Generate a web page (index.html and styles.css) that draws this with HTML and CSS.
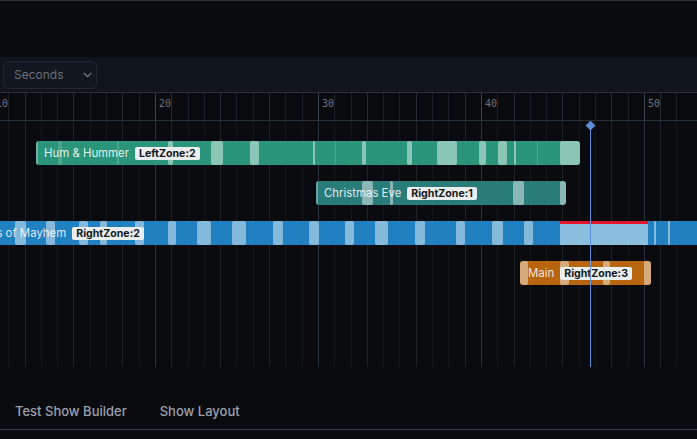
FILE: index.html
```html
<!DOCTYPE html>
<html>
<head>
<meta charset="utf-8">
<link rel="stylesheet" href="styles.css">
</head>
<body>
<div class="app">
  <header class="topbar"></header>
  <div class="toolbar">
    <div class="select">
      <span>Seconds</span>
      <svg class="chev" width="9" height="6" viewBox="0 0 9 6"><path d="M0.7 0.8l3.8 3.9 3.8-3.9" fill="none" stroke="#7b828d" stroke-width="1.2"/></svg>
    </div>
  </div>
  <div class="timeline">
    <div class="ruler">
      <div class="cols">
        <div class="col maj"><span>10</span></div><div class="col"></div><div class="col b3"></div><div class="col"></div><div class="col"></div><div class="col b3"></div><div class="col"></div><div class="col"></div><div class="col b3"></div><div class="col"></div>
        <div class="col maj"><span>20</span></div><div class="col b3"></div><div class="col"></div><div class="col"></div><div class="col b3"></div><div class="col"></div><div class="col"></div><div class="col b3"></div><div class="col"></div><div class="col"></div>
        <div class="col maj"><span>30</span></div><div class="col"></div><div class="col"></div><div class="col b3"></div><div class="col"></div><div class="col"></div><div class="col b3"></div><div class="col"></div><div class="col"></div><div class="col b3"></div>
        <div class="col maj"><span>40</span></div><div class="col"></div><div class="col b3"></div><div class="col"></div><div class="col"></div><div class="col b3"></div><div class="col"></div><div class="col"></div><div class="col b3"></div><div class="col"></div>
        <div class="col maj"><span>50</span></div><div class="col b3"></div><div class="col"></div>
      </div>
    </div>
    <div class="tracks">
      <div class="cols grid">
        <div class="col maj"></div><div class="col"></div><div class="col b3"></div><div class="col"></div><div class="col"></div><div class="col b3"></div><div class="col"></div><div class="col"></div><div class="col b3"></div><div class="col"></div>
        <div class="col maj"></div><div class="col b3"></div><div class="col"></div><div class="col"></div><div class="col b3"></div><div class="col"></div><div class="col"></div><div class="col b3"></div><div class="col"></div><div class="col"></div>
        <div class="col maj"></div><div class="col"></div><div class="col"></div><div class="col b3"></div><div class="col"></div><div class="col"></div><div class="col b3"></div><div class="col"></div><div class="col"></div><div class="col b3"></div>
        <div class="col maj"></div><div class="col"></div><div class="col b3"></div><div class="col"></div><div class="col"></div><div class="col b3"></div><div class="col"></div><div class="col"></div><div class="col b3"></div><div class="col"></div>
        <div class="col maj"></div><div class="col b3"></div><div class="col"></div>
      </div>
      <div class="lanes">
        <div class="lane">
          <div class="clip green" style="left:36px;width:544px">
            <i class="seg edge" style="left:0;width:2px"></i>
            <i class="seg f" style="left:22px;width:4px"></i>
            <i class="seg f" style="left:81px;width:2px"></i>
            <i class="seg" style="left:132px;width:5px"></i>
            <i class="seg" style="left:175px;width:12px"></i>
            <i class="seg" style="left:214px;width:9px"></i>
            <i class="seg" style="left:277px;width:2px"></i>
            <i class="seg f" style="left:299px;width:1px"></i>
            <i class="seg" style="left:326px;width:4px"></i>
            <i class="seg" style="left:371px;width:5px"></i>
            <i class="seg" style="left:401px;width:20px"></i>
            <i class="seg" style="left:443px;width:7px"></i>
            <i class="seg" style="left:462px;width:9px"></i>
            <i class="seg" style="left:478px;width:2px"></i>
            <i class="seg f" style="left:501px;width:1px"></i>
            <i class="seg" style="left:524px;width:20px"></i>
            <span class="label">Hum &amp; Hummer</span><span class="badge">LeftZone:2</span>
          </div>
        </div>
        <div class="lane">
          <div class="clip teal" style="left:316px;width:250px">
            <i class="seg edge" style="left:0;width:2px"></i>
            <i class="seg" style="left:46px;width:11px"></i>
            <i class="seg" style="left:74px;width:3px"></i>
            <i class="seg" style="left:197px;width:11px"></i>
            <i class="seg" style="left:244px;width:6px"></i>
            <span class="label">Christmas Eve</span><span class="badge">RightZone:1</span>
          </div>
        </div>
        <div class="lane">
          <div class="clip blue" style="left:-40px;width:780px">
            <i class="seg" style="left:55px;width:11px"></i>
            <i class="seg" style="left:86px;width:9px"></i>
            <i class="seg" style="left:119px;width:9px"></i>
            <i class="seg" style="left:140px;width:7px"></i>
            <i class="seg" style="left:175px;width:9px"></i>
            <i class="seg" style="left:208px;width:8px"></i>
            <i class="seg" style="left:237px;width:14px"></i>
            <i class="seg" style="left:272px;width:14px"></i>
            <i class="seg" style="left:313px;width:10px"></i>
            <i class="seg" style="left:349px;width:10px"></i>
            <i class="seg" style="left:385px;width:9px"></i>
            <i class="seg" style="left:415px;width:13px"></i>
            <i class="seg" style="left:455px;width:10px"></i>
            <i class="seg" style="left:496px;width:9px"></i>
            <i class="seg" style="left:532px;width:11px"></i>
            <i class="seg" style="left:564px;width:9px"></i>
            <i class="seg sel" style="left:600px;width:88px"></i>
            <i class="seg" style="left:694px;width:2px"></i>
            <i class="seg" style="left:708px;width:2px"></i>
            <span class="label">Carols of Mayhem</span><span class="badge">RightZone:2</span>
          </div>
        </div>
        <div class="lane">
          <div class="clip orange" style="left:520px;width:131px">
            <i class="seg" style="left:0;width:8px"></i>
            <i class="seg" style="left:40px;width:9px"></i>
            <i class="seg" style="left:83px;width:7px"></i>
            <i class="seg" style="left:124px;width:7px"></i>
            <span class="label">Main</span><span class="badge">RightZone:3</span>
          </div>
        </div>
      </div>
      <div class="playhead" style="left:590px"></div>
    </div>
  </div>
  <footer class="footer">
    <span class="tab">Test Show Builder</span>
    <span class="tab">Show Layout</span>
  </footer>
</div>
</body>
</html>
```
FILE: styles.css
```css
* { box-sizing: border-box; margin: 0; padding: 0; }
html, body { background: #0a0b0f; overflow: hidden; }
body { width: 697px; height: 439px; font-family: Inter, "Noto Sans", sans-serif; }

.app { display: flex; flex-direction: column; height: 439px; }

.topbar { height: 57px; flex: none; border-top: 1px solid #2b3039; background: #0a0b0f; }

.toolbar { height: 35px; flex: none; background: #10141b; display: flex; align-items: center; padding-left: 3px; }
.select {
  width: 94px; height: 28px; border: 1px solid #222832; border-radius: 5px; background: #121720;
  display: flex; align-items: center; justify-content: space-between; padding: 0 4px 0 10px;
  color: #69707b; font-size: 12px;
}
.chev { display: block; }

.timeline { flex: none; overflow: hidden; }
.ruler { height: 29px; border-top: 1px solid #2a303a; border-bottom: 1px solid #2a303a; overflow: hidden; }
.cols { display: grid; grid-template-columns: repeat(43, 16.3px); margin-left: -8px; height: 100%; }
.col { border-left: 1px solid #1c2028; }
.col.b3 { border-left-color: #272c34; }
.col.maj { border-left-color: #3a424e; }
.col span { display: block; padding: 5px 0 0 3px; font: 10px/12px "DejaVu Sans Mono", monospace; color: #6c7380; white-space: nowrap; }

.tracks { height: 246px; position: relative; overflow: hidden; }
.grid { position: absolute; top: 0; left: 0; bottom: 0; }
.grid .col { border-left-color: #14171d; }
.grid .col.b3 { border-left-color: #1e2229; }
.grid .col.maj { border-left-color: #2a323e; }

.lanes { position: relative; display: flex; flex-direction: column; gap: 16px; padding-top: 20px; }
.lane { position: relative; height: 24px; }
.clip {
  position: absolute; top: 0; height: 24px; border-radius: 3px; overflow: hidden;
  display: flex; align-items: center; padding-left: 8px; white-space: nowrap;
}
.clip.green { background: #2a957b; }
.clip.teal { background: #2a7c7a; }
.clip.blue { background: #2180c0; }
.clip.orange { background: #b7650f; }
.seg { position: absolute; top: 0; bottom: 0; background: rgba(255,255,255,.45); border-radius: 2px; }
.seg.f { background: rgba(255,255,255,.16); }
.seg.edge { background: rgba(255,255,255,.3); border-radius: 0; }
.seg.sel { background: rgba(255,255,255,.48); border-top: 3px solid #e3142c; border-radius: 0; }
.label { position: relative; font-size: 11.4px; color: rgba(255,255,255,.86); }
.badge {
  position: relative; margin-left: 6px; background: #e9eeee; color: #15181c;
  font-size: 10.6px; font-weight: 700; line-height: 13px; padding: 0 4px; border-radius: 2px;
}

.playhead { position: absolute; top: 0; bottom: 0; width: 1px; background: #5b8ed6; }
.playhead::before {
  content: ""; position: absolute; top: 1px; left: -3px; width: 7px; height: 7px;
  background: #5b8ed6; transform: rotate(45deg);
}

.footer {
  height: 63px; flex: none; border-bottom: 1px solid #363d48; display: flex; align-items: flex-end;
  gap: 33px; padding-left: 15px;
}
.tab { font-size: 13px; font-weight: 500; line-height: 36px; color: #9aa0aa; }
```
